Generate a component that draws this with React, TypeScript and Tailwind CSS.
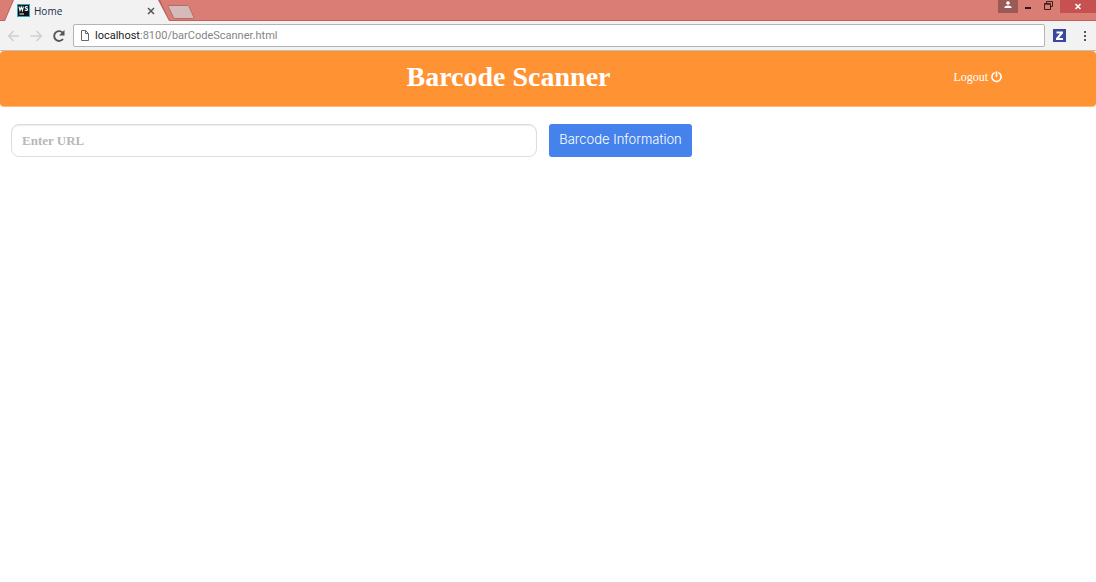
import React from "react";

function TitleBar() {
  return (
    <header className="flex h-[21px] items-start justify-between border-b border-[#c4605b] bg-[#da7d74]">
      <div className="flex">
        <div className="-mb-px ml-1 h-[21px] w-[166px] bg-[#b9605a] [clip-path:polygon(9px_0,156px_0,100%_100%,0_100%)]">
          <div className="flex h-[21px] w-[165px] items-center bg-[#f2f2f2] pr-3 pl-[13px] [clip-path:polygon(10px_0,154px_0,100%_100%,1px_100%)]">
            <svg viewBox="0 0 13 13" className="size-[13px]" aria-hidden="true">
              <rect width="13" height="13" fill="#35a3b8" />
              <rect x="1" y="1" width="11" height="11" fill="#0c1115" />
              <path d="M2 2.500l1 4 1.200-3.500L5.400 6.500l1-4M10.800 3.200C9.700 2.200 7.900 2.700 8.200 3.700c.3 1 2.500.6 2.500 1.700 0 1.200-2 1.300-3 .4M2.500 10h4.500" fill="none" stroke="#fff" strokeWidth="1.100" />
            </svg>
            <span className="ml-1 flex-1 text-[10px] leading-[14px] text-[#222a48]">Home</span>
            <button aria-label="Close tab" className="flex size-3 items-center justify-center">
              <svg viewBox="0 0 8 8" className="size-2" aria-hidden="true">
                <path d="M1 1l6 6M7 1L1 7" stroke="#555" strokeWidth="1.500" />
              </svg>
            </button>
          </div>
        </div>
        <button aria-label="New tab" className="mt-[3px] -ml-[3px]">
          <svg viewBox="0 0 28 14" className="h-[14px] w-[28px]" aria-hidden="true">
            <path d="M2 .5h18.500q1 0 1.400.8l5 11q.5 1.200-.6 1.200H8q-1 0-1.400-.8L1.200 1.700Q.8.5 2 .5z" fill="#d4bab9" stroke="#b76b66" />
          </svg>
        </button>
      </div>
      <div className="flex h-[13px]">
        <button aria-label="Profile" className="flex w-5 justify-center bg-[#9b5a54]">
          <svg viewBox="0 0 8 8" className="mt-px size-2" aria-hidden="true">
            <circle cx="4" cy="2" r="1.800" fill="#fff" />
            <path d="M.5 7V6Q1 4.500 4 4.500T7.500 6v1z" fill="#fff" />
          </svg>
        </button>
        <button aria-label="Minimize" className="flex w-5 items-end justify-center pb-1">
          <span className="h-[2px] w-[6px] bg-[#2b1a19]" />
        </button>
        <button aria-label="Restore" className="flex w-5 justify-center">
          <svg viewBox="0 0 9 9" className="mt-px size-[9px]" aria-hidden="true">
            <path d="M2.500 2V.5h6v5H7M.5 2.500h6v6h-6z" fill="none" stroke="#3a201e" />
            <path d="M.5 3.200h6" fill="none" stroke="#3a201e" />
          </svg>
        </button>
        <button aria-label="Close window" className="ml-[2px] flex w-9 items-center justify-center bg-[#c75050]">
          <svg viewBox="0 0 8 8" className="size-2" aria-hidden="true">
            <path d="M1.500 1l5 5M6.500 1l-5 5" stroke="#fff" strokeWidth="1.600" />
          </svg>
        </button>
      </div>
    </header>
  );
}

function Toolbar() {
  return (
    <nav aria-label="Browser" className="flex h-[30px] items-center border-b border-[#bfbfbf] bg-[#f2f2f2] px-2">
      <button aria-label="Back" className="w-[14px]">
        <svg viewBox="0 0 14 14" className="size-[14px]" fill="none" stroke="#cfcfcf" strokeWidth="1.500" aria-hidden="true">
          <path d="M5.500 2L.7 7l4.800 5M1 7h10" />
        </svg>
      </button>
      <button aria-label="Forward" className="ml-2 w-[14px]">
        <svg viewBox="0 0 14 14" className="size-[14px]" fill="none" stroke="#cfcfcf" strokeWidth="1.500" aria-hidden="true">
          <path d="M6.500 2l4.800 5-4.800 5M11 7H0.500" />
        </svg>
      </button>
      <button aria-label="Reload" className="ml-2 w-[14px]">
        <svg viewBox="0 0 14 14" className="size-[14px]" aria-hidden="true">
          <path d="M11 10A4.900 4.900 0 1 1 10.600 3.600" fill="none" stroke="#555" strokeWidth="1.900" />
          <path d="M12.500 1v5.500H7z" fill="#555" />
        </svg>
      </button>
      <div className="ml-[7px] flex h-[23px] flex-1 items-center rounded-[2px] border border-[#b4b4b4] bg-white pl-[7px]">
        <svg viewBox="0 0 8 11" className="h-[11px] w-2" fill="none" stroke="#666" aria-hidden="true">
          <path d="M.5.5h4l3 3v7h-7zM4.500.5v3h3" />
        </svg>
        <span className="ml-[6px] font-[Roboto,sans-serif] text-[11px] leading-4 text-[#858585]">
          <span className="text-[#222]">localhost</span>:8100/barCodeScanner.html
        </span>
      </div>
      <button aria-label="Extension" className="ml-2 size-[13px]">
        <svg viewBox="0 0 13 13" className="size-[13px]" aria-hidden="true">
          <rect width="13" height="13" fill="#3a489c" />
          <path d="M3.500 2.500h6.500v1.800L6 9h4v2H3V9.200L7 4.500H3.500z" fill="#fff" />
        </svg>
      </button>
      <button aria-label="Menu" className="ml-4 flex w-[6px] flex-col items-center gap-[2px]">
        <span className="size-[2px] bg-[#555]" />
        <span className="size-[2px] bg-[#555]" />
        <span className="size-[2px] bg-[#555]" />
      </button>
    </nav>
  );
}

export default function App() {
  return (
    <div className="min-h-screen bg-white font-['Open_Sans',sans-serif]">
      <TitleBar />
      <Toolbar />
      <main>
        <div className="grid h-14 grid-cols-[37%_50%_1fr] items-center rounded border-b border-[#ffb877] bg-[#ff9333] font-['Liberation_Serif',serif] text-white">
          <h1 className="col-start-2 pb-1 pl-px text-[28px] leading-8 font-bold">Barcode Scanner</h1>
          <a href="#logout" className="flex items-center gap-[3px] pb-[3px] text-[12px] leading-4">
            Logout
            <svg viewBox="0 0 11 12" className="h-3 w-[11px]" fill="none" stroke="#fff" strokeWidth="1.600" strokeLinecap="round" aria-hidden="true">
              <path d="M3.200 1.900a4.600 4.600 0 1 0 4.600 0M5.500 1v4.500" />
            </svg>
          </a>
        </div>
        <form className="flex items-center gap-3 px-[11px] pt-[17px]" onSubmit={(e) => e.preventDefault()}>
          <input
            type="text"
            aria-label="Enter URL"
            placeholder="Enter URL"
            className="h-[33px] w-[49%] rounded-lg border border-[#dddddd] px-[10px] font-['Liberation_Serif',serif] text-[13px] font-bold text-[#555] shadow-[inset_0_1px_1px_rgba(0,0,0,0.08)] placeholder:text-[#b8b8b8]"
          />
          <button type="submit" className="h-[33px] rounded-[3px] bg-[#4582ec] px-[10px] pb-px font-[Inter,sans-serif] text-[13px] font-light text-white">
            Barcode Information
          </button>
        </form>
      </main>
    </div>
  );
}
